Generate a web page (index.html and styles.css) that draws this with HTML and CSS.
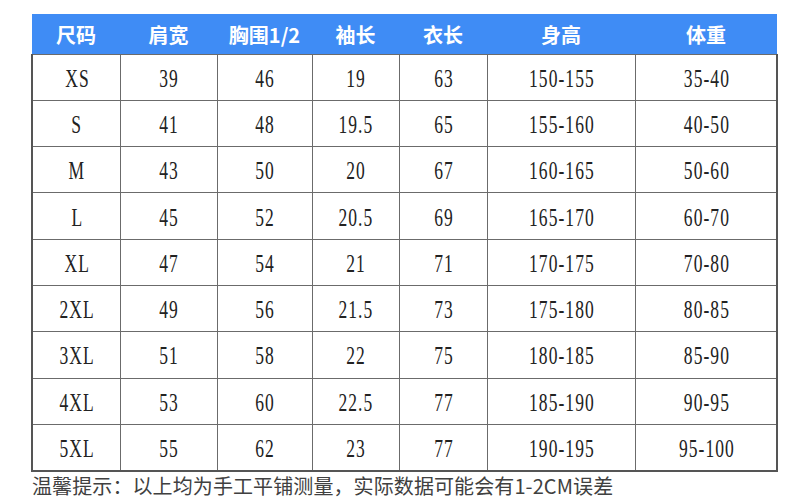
FILE: index.html
```html
<!DOCTYPE html>
<html lang="zh-CN">
<head>
<meta charset="utf-8">
<title>尺码表</title>
<link rel="stylesheet" href="styles.css">
</head>
<body>
<div class="page">
  <table class="chart">
    <colgroup>
      <col class="c1"><col class="c2"><col class="c3"><col class="c4"><col class="c5"><col class="c6"><col class="c7">
    </colgroup>
    <thead>
      <tr><th>尺码</th><th>肩宽</th><th>胸围1/2</th><th>袖长</th><th>衣长</th><th>身高</th><th>体重</th></tr>
    </thead>
    <tbody>
      <tr><td><span>XS</span></td><td><span>39</span></td><td><span>46</span></td><td><span>19</span></td><td><span>63</span></td><td><span>150-155</span></td><td><span>35-40</span></td></tr>
      <tr><td><span>S</span></td><td><span>41</span></td><td><span>48</span></td><td><span>19.5</span></td><td><span>65</span></td><td><span>155-160</span></td><td><span>40-50</span></td></tr>
      <tr><td><span>M</span></td><td><span>43</span></td><td><span>50</span></td><td><span>20</span></td><td><span>67</span></td><td><span>160-165</span></td><td><span>50-60</span></td></tr>
      <tr><td><span>L</span></td><td><span>45</span></td><td><span>52</span></td><td><span>20.5</span></td><td><span>69</span></td><td><span>165-170</span></td><td><span>60-70</span></td></tr>
      <tr><td><span>XL</span></td><td><span>47</span></td><td><span>54</span></td><td><span>21</span></td><td><span>71</span></td><td><span>170-175</span></td><td><span>70-80</span></td></tr>
      <tr><td><span>2XL</span></td><td><span>49</span></td><td><span>56</span></td><td><span>21.5</span></td><td><span>73</span></td><td><span>175-180</span></td><td><span>80-85</span></td></tr>
      <tr><td><span>3XL</span></td><td><span>51</span></td><td><span>58</span></td><td><span>22</span></td><td><span>75</span></td><td><span>180-185</span></td><td><span>85-90</span></td></tr>
      <tr><td><span>4XL</span></td><td><span>53</span></td><td><span>60</span></td><td><span>22.5</span></td><td><span>77</span></td><td><span>185-190</span></td><td><span>90-95</span></td></tr>
      <tr><td><span>5XL</span></td><td><span>55</span></td><td><span>62</span></td><td><span>23</span></td><td><span>77</span></td><td><span>190-195</span></td><td><span>95-100</span></td></tr>
    </tbody>
  </table>
  <p class="note">温馨提示：以上均为手工平铺测量，实际数据可能会有1-2CM误差</p>
</div>
</body>
</html>
```

FILE: styles.css
```css
html, body {
  margin: 0;
  padding: 0;
  background: #ffffff;
}

.page {
  width: 807px;
  height: 500px;
  padding: 14px 0 0 31px;
  box-sizing: border-box;
  overflow: hidden;
}

.chart {
  table-layout: fixed;
  width: 745px;
  border-collapse: collapse;
}

.c1 { width: 88px; }
.c2 { width: 97px; }
.c3 { width: 95px; }
.c4 { width: 87px; }
.c5 { width: 88px; }
.c6 { width: 148px; }
.c7 { width: 142px; }

.chart th {
  height: 40px;
  padding: 3px 0 0;
  background: #3f8cf5;
  color: #ffffff;
  font-family: "Noto Sans CJK SC", "Noto Sans", sans-serif;
  font-weight: 700;
  font-size: 20px;
  line-height: 24px;
  text-align: center;
  border: none;
  box-sizing: border-box;
}

.chart td {
  height: 46.3px;
  padding: 3px 0 0;
  border: 1px solid #6b6b6b;
  text-align: center;
  vertical-align: middle;
  color: #222222;
  font-family: "Liberation Serif", "Times New Roman", serif;
  font-size: 25px;
  line-height: 28px;
  box-sizing: border-box;
}

.chart td span {
  display: inline-block;
  letter-spacing: 1.5px;
  margin-right: -1.5px;
  transform: scaleX(0.7);
}

.chart tbody tr td:first-child { border-left: 2px solid #555555; }
.chart tbody tr td:last-child { border-right: 2px solid #555555; }
.chart tbody tr:last-child td { border-bottom: 2px solid #555555; }

.note {
  margin: 2px 0 0 1px;
  font-family: "Noto Sans CJK SC", "Noto Sans", sans-serif;
  font-size: 20px;
  line-height: 24px;
  color: #404040;
  letter-spacing: 0.1px;
}
```
